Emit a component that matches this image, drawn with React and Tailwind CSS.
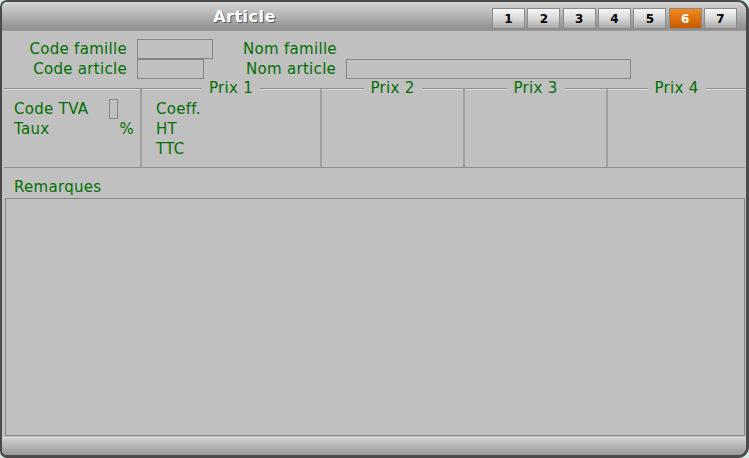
import React from 'react';

const tabs = ['1', '2', '3', '4', '5', '6', '7'];

const Legend = ({ children }) => (
  <span className="absolute left-1/2 -translate-x-1/2 -top-[9px] bg-[#c0c0c0] px-[7px] leading-[16px] text-[#006f00]">
    {children}
  </span>
);

const App = () => {
  return (
    <div className="w-[749px] h-[458px] bg-[#d5ebe6] font-['DejaVu_Sans',sans-serif] text-[15px] tracking-[0.3px] text-[#006f00]">
      <div className="h-full flex flex-col bg-[#c0c0c0] border-[#4a4a4a] border-t-2 border-l-2 border-r-[3px] border-b-[3px] rounded-tl-[7px] rounded-bl-[7px] rounded-tr-[11px] rounded-br-[11px] overflow-hidden">
        {/* Title bar */}
        <div className="h-[29px] flex items-start bg-gradient-to-b from-[#d6d6d6] to-[#8e8e8e] border-b border-[#9a9a9a]">
          <div className="flex-1 h-[29px] flex items-center justify-center pr-[5px]">
            <span className="text-white font-bold text-[16px] tracking-[0.5px] [text-shadow:1px_1px_0_#5a5a5a]">Article</span>
          </div>
          <div className="flex gap-[2.33px] pt-[6px] pr-[9px]">
            {tabs.map(t => (
              <div
                key={t}
                className={`w-[33px] h-[21px] flex items-center justify-center text-[12px] font-bold tracking-normal border border-[#8a8a8a] ${
                  t === '6'
                    ? 'bg-gradient-to-b from-[#f08a1c] to-[#c85a00] text-white'
                    : 'bg-gradient-to-b from-[#f6f6f6] via-[#d9d9d9] to-[#a9a9a9] text-black'
                }`}
              >
                {t}
              </div>
            ))}
          </div>
        </div>

        {/* Body */}
        <div className="flex-1 flex flex-col">
          <div className="pt-[8px]">
            <div className="flex h-[20px] items-center">
              <span className="w-[125px] text-right">Code famille</span>
              <div className="ml-[10px] w-[76px] h-[20px] border border-[#858585]"></div>
              <span className="ml-[30px]">Nom famille</span>
            </div>
            <div className="flex h-[20px] items-center">
              <span className="w-[125px] text-right">Code article</span>
              <div className="ml-[10px] w-[67px] h-[20px] border border-[#858585]"></div>
              <span className="ml-[42px] w-[100px]">Nom article</span>
              <div className="w-[285px] h-[20px] border border-[#858585]"></div>
            </div>
          </div>

          {/* Prix group */}
          <div className="mt-[9px] ml-[2px] w-[741px] h-[80px] flex border-t border-b border-[#8e8e8e] shadow-[inset_0_1px_0_#dedede]">
            <div className="w-[136px] pt-[10px] pl-[10px]">
              <div className="flex h-[20px] items-center">
                <span className="w-[95px]">Code TVA</span>
                <div className="w-[9px] h-[20px] border border-[#858585]"></div>
              </div>
              <div className="flex h-[20px] items-center justify-between w-[120px]">
                <span>Taux</span>
                <span>%</span>
              </div>
            </div>
            <div className="relative w-[180px] border-l-2 border-[#a0a0a0] pt-[10px] pl-[14px]">
              <Legend>Prix 1</Legend>
              <div className="h-[20px] leading-[20px]">Coeff.</div>
              <div className="h-[20px] leading-[20px]">HT</div>
              <div className="h-[20px] leading-[20px]">TTC</div>
            </div>
            <div className="relative w-[143px] border-l-2 border-[#a0a0a0]">
              <Legend>Prix 2</Legend>
            </div>
            <div className="relative w-[143px] border-l-2 border-[#a0a0a0]">
              <Legend>Prix 3</Legend>
            </div>
            <div className="relative w-[139px] border-l-2 border-[#a0a0a0]">
              <Legend>Prix 4</Legend>
            </div>
          </div>

          <div className="mt-[9px] pl-[12px] h-[20px] leading-[20px]">Remarques</div>
          <div className="mt-[1px] ml-[3px] w-[740px] h-[238px] border border-[#858585]"></div>

          {/* Bottom bar */}
          <div className="mt-auto h-[18px] bg-gradient-to-b from-[#d0d0d0] to-[#999999] border-t border-[#dadada]"></div>
        </div>
      </div>
    </div>
  );
};

export default App;
